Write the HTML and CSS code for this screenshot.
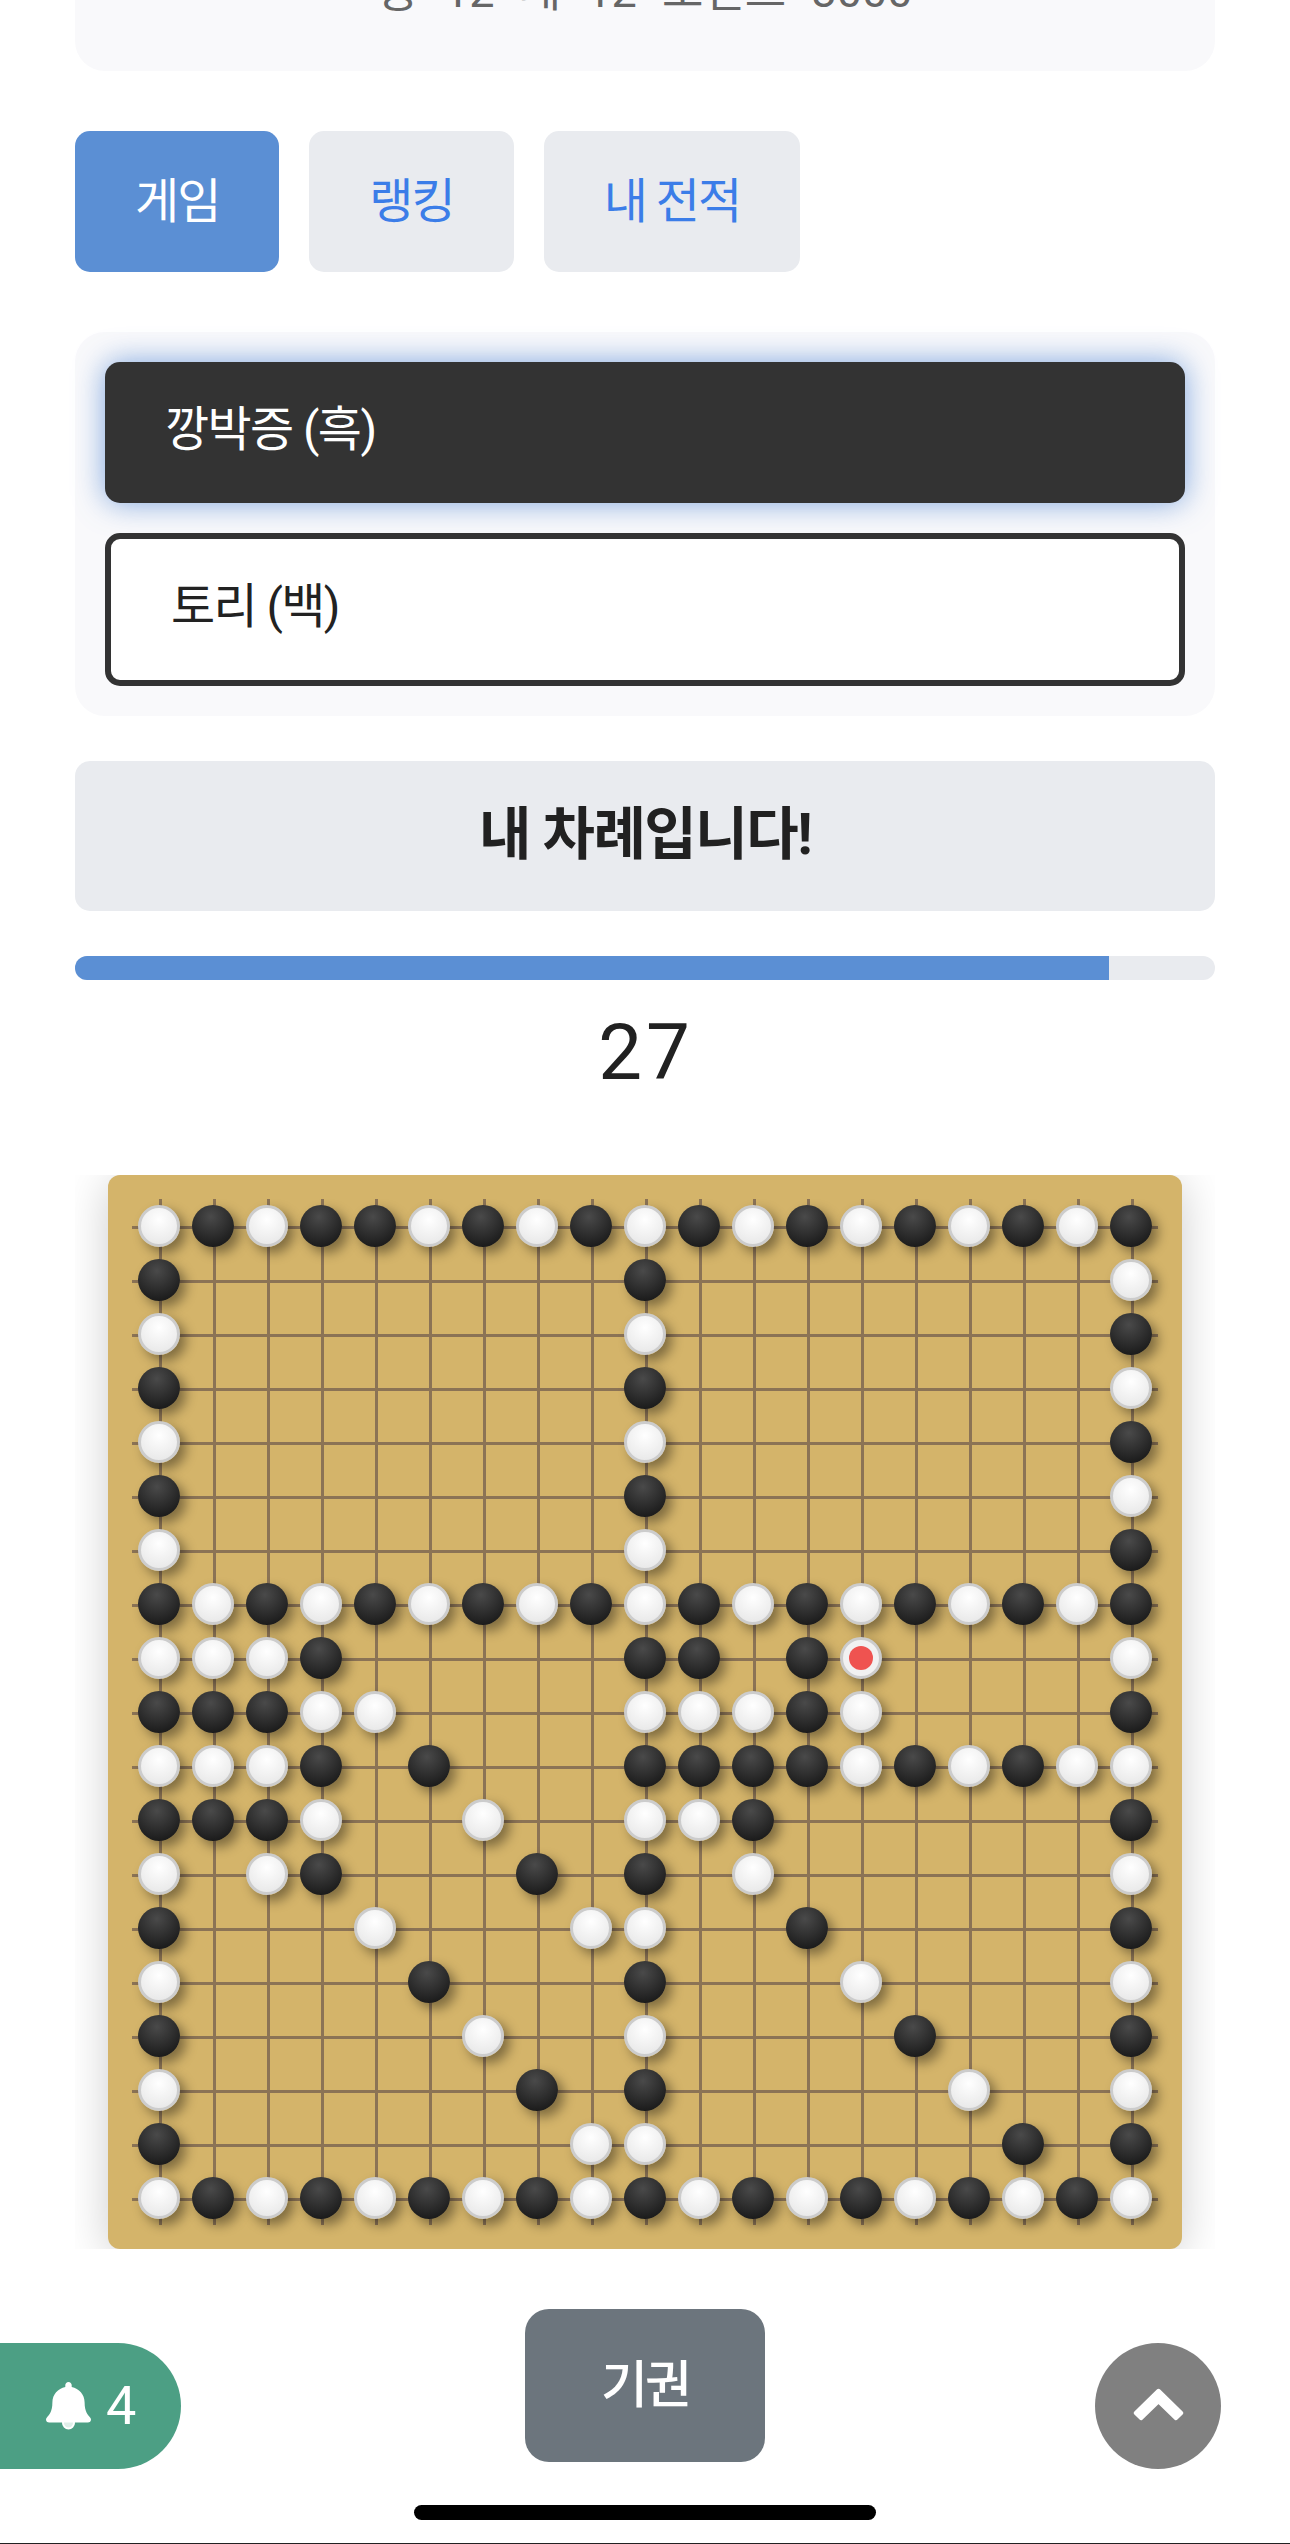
FILE: index.html
```html
<!DOCTYPE html>
<html lang="ko">
<head>
<meta charset="utf-8">
<title>오목</title>
<link rel="stylesheet" href="styles.css">
</head>
<body>
<div class="page">
  <main class="content">
    <section class="stats-card"><p class="stats">승 12 패 12 포인트 3000</p></section>
    <nav class="tabs">
      <button class="tab tab-active">게임</button>
      <button class="tab">랭킹</button>
      <button class="tab">내 전적</button>
    </nav>
    <section class="players">
      <div class="player player-black">깡박증 (흑)</div>
      <div class="player player-white">토리 (백)</div>
    </section>
    <div class="turn">내 차례입니다!</div>
    <div class="progress"><div class="progress-fill"></div></div>
    <div class="timer">27</div>
    <div class="board-wrap">
      <div class="board"><div class="grid" id="grid"></div></div>
    </div>
  </main>
  <footer class="actions">
    <button class="notify">
      <svg class="bell" viewBox="0 0 45 48" aria-hidden="true">
        <circle class="bell-clapper" cx="22.5" cy="41" r="5.5"/>
        <path class="bell-body" d="M22.500 0c-1.800 0-3.200 1.400-3.200 3.100v2C12 6.600 6.400 12.700 6.400 20.300c0 10-3.600 13-5.500 15.100-.6.600-.9 1.400-.9 2.100 0 1.600 1.300 3.100 3.200 3.100h38.600c1.900 0 3.200-1.500 3.200-3.100 0-.7-.3-1.500-.9-2.100-1.900-2.100-5.500-5.100-5.500-15.100 0-7.600-5.600-13.700-12.900-15.200v-2C25.700 1.400 24.300 0 22.500 0z"/>
      </svg>
      <span class="notify-count">4</span>
    </button>
    <button class="record">기권</button>
    <button class="top-btn" aria-label="위로">
      <svg class="chevron" viewBox="0 0 51 33" aria-hidden="true"><polygon points="25.5,2.800 48.200,25 43,30.200 25.500,13.200 8,30.200 2.800,25"/></svg>
    </button>
  </footer>
  <div class="home-bar"><span class="home-indicator"></span></div>
</div>
<script src="board.js"></script>
</body>
</html>
```

FILE: styles.css
```css
* { box-sizing: border-box; }
html, body { margin: 0; padding: 0; background: #fff; }
body {
  font-family: Roboto, "Noto Sans CJK KR", sans-serif;
  color: #212121;
  overflow: hidden;
}
button { font-family: inherit; border: 0; cursor: pointer; padding: 0; }
.page {
  height: 2544px;
  overflow: hidden;
  border-bottom: 1px solid #222;
  display: flex;
  flex-direction: column;
}
.content { padding: 0 75px; }

.stats-card {
  height: 200px;
  margin-top: -129px;
  background: #f9f9fb;
  border-radius: 30px;
  display: flex;
  align-items: flex-end;
  justify-content: center;
}
.stats {
  margin: 0 0 48px;
  font-size: 45px;
  line-height: 63px;
  word-spacing: 14px;
  color: #666;
}

.tabs { display: flex; gap: 30px; margin-top: 60px; }
.tab {
  height: 141px;
  padding: 0 60px 10px;
  background: #e9ebef;
  color: #3b7de8;
  font-size: 48px;
  letter-spacing: -2px;
  border-radius: 15px;
}
.tab-active { background: #5b8fd4; color: #fff; }

.players {
  margin-top: 60px;
  padding: 30px;
  background: #f9f9fb;
  border-radius: 30px;
  display: flex;
  flex-direction: column;
  gap: 30px;
}
.player {
  font-size: 48px;
  line-height: 69px;
  letter-spacing: -1.6px;
  border-radius: 15px;
  padding: 33px 60px 39px;
}
.player-black {
  background: #333;
  color: #fff;
  box-shadow: 0 0 30px rgba(74, 130, 210, .7);
}
.player-white {
  background: #fff;
  color: #222;
  border: 6px solid #333;
  height: 153px;
}

.turn {
  margin-top: 45px;
  height: 150px;
  padding-bottom: 14px;
  background: #e9ebef;
  border-radius: 15px;
  display: flex;
  align-items: center;
  justify-content: center;
  font-size: 57px;
  font-weight: 700;
  letter-spacing: -1.5px;
  color: #212121;
}

.progress {
  margin-top: 45px;
  height: 24px;
  background: #e9ebef;
  border-radius: 12px;
  overflow: hidden;
}
.progress-fill { width: 90.7%; height: 100%; background: #5b8fd4; }

.timer {
  height: 195px;
  padding: 25px 0 0 2px;
  text-align: center;
  font-size: 78px;
  line-height: 96px;
  letter-spacing: 4px;
  color: #212121;
}

.board-wrap {
  padding: 0 33px;
  overflow: hidden;
}
.board {
  width: 1074px;
  height: 1074px;
  padding: 24px;
  background: #d4b46a;
  border-radius: 12px;
  box-shadow: 0 6px 45px rgba(0, 0, 0, .2);
}
.grid {
  display: grid;
  grid-template-columns: repeat(19, 54px);
  grid-auto-rows: 54px;
  background-image:
    linear-gradient(to right, transparent 27px, #8b7355 27px, #8b7355 30px, transparent 30px),
    linear-gradient(to bottom, transparent 27px, #8b7355 27px, #8b7355 30px, transparent 30px);
  background-size: 54px 54px;
}
.cell { display: flex; align-items: center; justify-content: center; }
.stone {
  width: 42px;
  height: 42px;
  border-radius: 50%;
  position: relative;
  z-index: 1;
  display: flex;
  align-items: center;
  justify-content: center;
  box-shadow: 6px 6px 12px rgba(0, 0, 0, .4);
}
.stone-b { background: radial-gradient(circle at 45% 28%, #4a4a4a, #1c1c1c 78%); }
.stone-w {
  background: radial-gradient(circle at 50% 32%, #fff, #e8e8e8 85%);
  border: 3px solid #ccc;
}
.stone-last { background: #f1f1f1; }
.stone-last::after {
  content: "";
  width: 24px;
  height: 24px;
  border-radius: 50%;
  background: #ef5350;
}

.actions {
  margin-top: 60px;
  display: grid;
  grid-template-columns: 1fr 240px 1fr;
  grid-template-rows: 160px;
  align-items: end;
}
.notify {
  justify-self: start;
  width: 181px;
  height: 126px;
  background: #4c9f84;
  color: #fff;
  border-radius: 0 63px 63px 0;
  display: flex;
  align-items: center;
  padding-left: 46px;
  gap: 15px;
}
.bell { width: 45px; height: 48px; display: block; }
.bell-body { fill: #fff; }
.bell-clapper { fill: #dfeee9; stroke: #fff; stroke-width: 2; }
.notify-count { font-size: 54px; line-height: 1; }
.record {
  align-self: start;
  height: 153px;
  padding-bottom: 10px;
  background: #6c757d;
  color: #fff;
  font-size: 51px;
  font-weight: 500;
  letter-spacing: -3px;
  border-radius: 24px;
}
.top-btn {
  justify-self: end;
  margin-right: 69px;
  width: 126px;
  height: 126px;
  border-radius: 50%;
  background: #808080;
  display: flex;
  align-items: center;
  justify-content: center;
}
.chevron {
  width: 51px;
  height: 33px;
  margin-bottom: 4px;
  fill: #fff;
  stroke: #fff;
  stroke-width: 4;
  stroke-linejoin: round;
}

.home-bar { margin-top: 36px; display: flex; justify-content: center; }
.home-indicator { width: 462px; height: 15px; background: #000; border-radius: 8px; }
```

FILE: board.js
```js
var rows = [
  "wbwbbwbwbwbwbwbwbwb",
  "b........b........w",
  "w........w........b",
  "b........b........w",
  "w........w........b",
  "b........b........w",
  "w........w........b",
  "bwbwbwbwbwbwbwbwbwb",
  "wwwb.....bb.bR....w",
  "bbbww....wwwbw....b",
  "wwwb.b...bbbbwbwbww",
  "bbbw..w..wwb......b",
  "w.wb...b.b.w......w",
  "b...w...ww..b.....b",
  "w....b...b...w....w",
  "b.....w..w....b...b",
  "w......b.b.....w..w",
  "b.......ww......b.b",
  "wbwbwbwbwbwbwbwbwbw"
];
var classes = { b: "stone stone-b", w: "stone stone-w", R: "stone stone-w stone-last" };
var grid = document.getElementById("grid");
rows.forEach(function (row) {
  row.split("").forEach(function (ch) {
    var cell = document.createElement("div");
    cell.className = "cell";
    if (classes[ch]) {
      var stone = document.createElement("div");
      stone.className = classes[ch];
      cell.appendChild(stone);
    }
    grid.appendChild(cell);
  });
});
```
